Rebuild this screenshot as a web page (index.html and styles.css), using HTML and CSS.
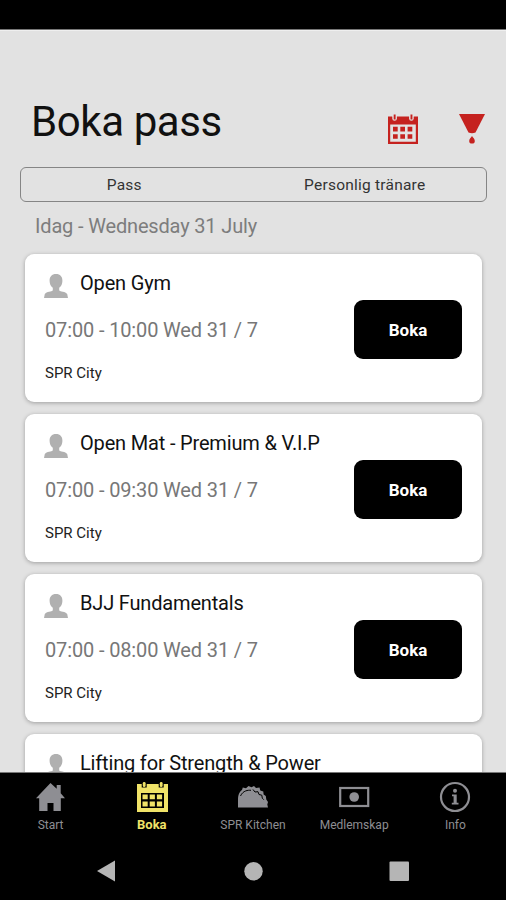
FILE: index.html
```
<!DOCTYPE html>
<html lang="sv">
<head>
<meta charset="utf-8">
<title>Boka pass</title>
<link rel="stylesheet" href="styles.css">
</head>
<body>
<svg class="defs" width="0" height="0" aria-hidden="true">
  <symbol id="person" viewBox="0 0 24 24"><path d="M12 0C7.800 0 5.400 2.700 5.600 7c.1 2.800 1.100 5.300 3.200 6.800v2.700C7.900 17.600 2.500 17.400.8 20L0 24h24l-.8-4c-1.700-2.600-7.100-2.400-8-3.500v-2.700c2.100-1.500 3.100-4 3.200-6.800C18.600 2.700 16.200 0 12 0z"/></symbol>
</svg>
<div class="status"></div>
<main class="page">
  <header class="header">
    <h1 class="title">Boka pass</h1>
    <svg class="calendar" width="30" height="30" viewBox="0 0 30 30">
      <path fill-rule="evenodd" d="M0 2.500h30V30H0zM2.200 10.500V27.800h25.600V10.500z"/>
      <path d="M5 12.800h4.700v4.700H5zm7.300 0h4.700v4.700h-4.700zm7.300 0h4.700v4.700h-4.700zM5 20.300h4.700v4.500H5zm7.300 0h4.700v4.500h-4.700zm7.300 0h4.700v4.500h-4.700z"/>
      <g class="calendar-rings"><rect x="4.300" y="0" width="4.600" height="6.800" rx="2.300"/><rect x="21.100" y="0" width="4.600" height="6.800" rx="2.300"/></g>
      <path d="M5.700 .5h1.900v5H5.700zm16.800 0h1.900v5h-1.900z"/>
    </svg>
    <svg class="filter" width="26" height="30" viewBox="0 0 26 30">
      <path d="M0 0h26l-9.500 18.500q-3.500 1.500-7 0z"/><path d="M13 22c1 1.700 2.800 3 2.800 4.900a2.800 2.600 0 0 1-5.600 0C10.200 25 12 23.700 13 22z"/>
    </svg>
  </header>
  <div class="tabs"><span class="tab tab-pass">Pass</span><span class="tab tab-trainer">Personlig tränare</span></div>
  <h2 class="date">Idag - Wednesday 31 July</h2>
  <section class="list">
    <article class="card">
      <div class="details">
        <h3 class="name"><svg class="person"><use href="#person"/></svg><span>Open Gym</span></h3>
        <p class="time">07:00 - 10:00 Wed 31 / 7</p>
        <p class="place">SPR City</p>
      </div>
      <button class="book">Boka</button>
    </article>
    <article class="card">
      <div class="details">
        <h3 class="name"><svg class="person"><use href="#person"/></svg><span>Open Mat - Premium &amp; V.I.P</span></h3>
        <p class="time">07:00 - 09:30 Wed 31 / 7</p>
        <p class="place">SPR City</p>
      </div>
      <button class="book">Boka</button>
    </article>
    <article class="card">
      <div class="details">
        <h3 class="name"><svg class="person"><use href="#person"/></svg><span>BJJ Fundamentals</span></h3>
        <p class="time">07:00 - 08:00 Wed 31 / 7</p>
        <p class="place">SPR City</p>
      </div>
      <button class="book">Boka</button>
    </article>
    <article class="card">
      <div class="details">
        <h3 class="name"><svg class="person"><use href="#person"/></svg><span>Lifting for Strength &amp; Power</span></h3>
      </div>
    </article>
  </section>
</main>
<nav class="nav">
  <a class="item"><svg class="icon" viewBox="0 0 30 30"><path d="M14.500 1 0 16.300h3.200V29h8.300v-8h6v8h7.300V16.300H29l-4.300-5V3h-4v3.800z"/></svg><span>Start</span></a>
  <a class="item active"><svg class="icon" viewBox="0 0 30 30">
    <rect x="0" y="2" width="31" height="28"/>
    <path class="cut" d="M4 11h23v15H4z"/>
    <path d="M5.500 12.500h5.200v4.800H5.500zm7.200 0h5.200v4.800h-5.200zm7.200 0h5.200v4.800h-5.200zM5.500 19.500h5.200v5H5.500zm7.200 0h5.200v5h-5.200zm7.200 0h5.200v5h-5.200z"/>
    <path class="cut" d="M4.700 0h5v5.500h-5zm17 0h5v5.500h-5z"/>
    <rect x="5.800" y="0" width="2.800" height="5" rx="1.300"/><rect x="22.800" y="0" width="2.800" height="5" rx="1.300"/>
  </svg><span>Boka</span></a>
  <a class="item"><svg class="icon" viewBox="0 0 30 30">
    <path d="M0 25.500V18C0 12 2 9.500 4 8l.8-2.500 3.200.8L10.500 4l3 1.300L16 4l2 2 3.500-.5.8 3 3 1 .3 3 2.200 1.500.5 3.500 1.700 2.500-.7 2.500.7 3z"/>
    <path class="crease" d="M2.500 14C5 8.500 10 8 13 8.300M15 7.500l2 2.500 3-.3 1 2.800 2.800.7.500 3 1.500 1.500"/>
  </svg><span>SPR Kitchen</span></a>
  <a class="item"><svg class="icon line" viewBox="0 0 30 30"><rect x="1.200" y="6" width="28" height="18"/><circle class="solid" cx="15.200" cy="15" r="4.800"/></svg><span>Medlemskap</span></a>
  <a class="item"><svg class="icon line" viewBox="0 0 30 30"><circle cx="15" cy="15" r="14"/><circle class="solid" cx="15" cy="8.800" r="2"/><path class="solid" d="M12 12.500h4.700v8.300h1.800v1.700h-6.700v-1.700h1.800v-6.600H12z"/></svg><span>Info</span></a>
</nav>
<footer class="system">
  <svg width="506" height="58" viewBox="0 0 506 58"><path d="M97 29 115 18.500v21z"/><circle cx="253.500" cy="29.300" r="9.200"/><rect x="389.500" y="19.500" width="19.500" height="19.500" rx="1"/></svg>
</footer>
</body>
</html>
```
FILE: styles.css
```
* { box-sizing: border-box; }
body { margin: 0; width: 506px; height: 900px; overflow: hidden; display: flex; flex-direction: column; background: #000; font-family: Roboto, sans-serif; color: #111; }
h1, h2, h3, p { margin: 0; font-weight: 400; white-space: nowrap; }
.defs { display: none; }
.status { height: 30px; flex: none; background: #000; border-bottom: 1px solid #777; }
.page { height: 743px; flex: none; overflow: hidden; background: #e2e2e2; border-top: 1px solid #efefef; border-bottom: 1px solid #777; }
.header { display: flex; height: 136px; padding: 64px 21px 0 31px; }
.title { flex: 1; font-size: 42px; line-height: 54px; letter-spacing: -.4px; }
.calendar { margin: 19px 41px 0 0; fill: #c5221f; }
.calendar-rings { fill: #e2e2e2; }
.filter { margin-top: 19px; fill: #c5221f; }
.tabs { display: flex; height: 35px; margin: 0 19px 0 20px; border: 1.500px solid #858585; border-radius: 6px; }
.tab { width: 50%; text-align: center; font-size: 15.500px; line-height: 34px; letter-spacing: .23px; color: #333; }
.tab-pass { padding-right: 26px; }
.tab-trainer { padding-right: 10px; }
.date { margin: 11px 0 0 35px; font-size: 20px; line-height: 26px; letter-spacing: -.16px; color: #7d7d7d; }
.list { display: flex; flex-direction: column; gap: 12px; padding: 15px 24px 0 25px; }
.card { display: flex; height: 148px; flex: none; background: #fff; border-radius: 9px; box-shadow: 0 1px 4px rgba(0,0,0,.3); padding: 0 20px; }
.details { flex: 1; }
.name { display: flex; align-items: flex-start; gap: 12px; padding-top: 16px; height: 60px; font-size: 20px; line-height: 27px; letter-spacing: -.17px; }
.person { width: 24px; height: 24px; margin: 4px 0 0 -1px; fill: #b0b0b0; }
.time { font-size: 20px; line-height: 32px; letter-spacing: -.14px; color: #777; }
.place { margin-top: 17px; font-size: 15px; line-height: 20px; color: #222; }
.book { width: 108px; height: 59px; margin-top: 46px; padding: 0; background: #000; color: #fff; border: 0; border-radius: 9px; font: 700 17px Roboto, sans-serif; }
.nav { display: flex; flex: none; height: 69px; background: #000; }
.item { display: flex; flex-direction: column; align-items: center; width: 20%; padding-top: 9px; color: #8e8e93; font-size: 12px; line-height: 16px; white-space: nowrap; }
.icon { width: 30px; height: 30px; margin-bottom: 5px; fill: #8e8e93; overflow: visible; }
.active { color: #f0e368; font-weight: 700; font-size: 13px; }
.active .icon { fill: #f0e368; }
.active .cut { fill: #000; }
.icon .crease { fill: none; stroke: #000; stroke-width: 1; }
.line { fill: none; stroke: #8e8e93; stroke-width: 2.200; }
.line .solid { fill: #8e8e93; stroke: none; }
.system { height: 58px; flex: none; }
.system svg { display: block; fill: #b5b5b5; }
```
